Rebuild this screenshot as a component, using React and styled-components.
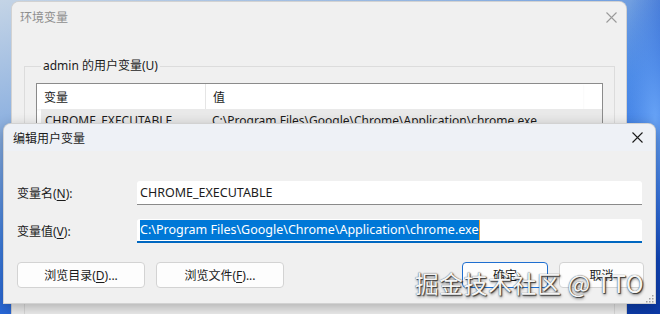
import styled, { createGlobalStyle } from 'styled-components';

const Global = createGlobalStyle`
  html, body {
    margin: 0;
    padding: 0;
    overflow: hidden;
  }
  body {
    font-family: 'Noto Sans', 'Noto Sans CJK SC', sans-serif;
    font-size: 12px;
    color: #1b1b1b;
  }
`

const Desktop = styled.div`
  position: relative;
  width: 660px;
  height: 314px;
  overflow: hidden;
  background:
    radial-gradient(ellipse 60px 200px at 655px 120px, rgba(120, 180, 255, 0.8), transparent 70%),
    radial-gradient(ellipse 90px 260px at 700px 60px, #0a3fc0, transparent 80%),
    linear-gradient(165deg, #c4d4e6 0%, #8fb2e0 25%, #3f7fe0 50%, #1656d4 75%, #0c3aa8 100%);
`

const Window = styled.div`
  position: absolute;
  left: ${p => p.$left}px;
  top: ${p => p.$top}px;
  width: ${p => p.$width}px;
  height: ${p => p.$height}px;
  display: flex;
  flex-direction: column;
  border-radius: 8px 8px 0 0;
  border: 1px solid rgba(0, 0, 0, 0.12);
  box-sizing: border-box;
  overflow: hidden;
  background: ${p => p.$bg};
  box-shadow: ${p => p.$shadow ? '0 4px 14px rgba(0, 0, 0, 0.28)' : 'none'};
`

const TitleBar = styled.div`
  display: flex;
  align-items: center;
  justify-content: space-between;
  height: ${p => p.$height}px;
  padding: 0 ${p => p.$padRight}px 0 ${p => p.$padLeft}px;
  background: ${p => p.$bg};
  color: ${p => p.$color};
  flex-shrink: 0;
`

const TitleText = styled.span`
  font-size: 12px;
`

const BackContent = styled.div`
  padding: 26px 11px 0 12px;
  flex: 1;
`

const GroupBox = styled.fieldset`
  margin: 0;
  height: 300px;
  border: 1px solid #dcdcdc;
  border-bottom: none;
  padding: 9px 11px 0 11px;
`

const Legend = styled.legend`
  padding: 0 2px;
  margin-left: 5px;
  font-size: 12px;
  line-height: 16px;
  color: #1b1b1b;
`

const ListView = styled.div`
  border: 1px solid #8c8c8c;
  background: #ffffff;
  height: 160px;
  display: flex;
  flex-direction: column;
`

const ListHeader = styled.div`
  display: grid;
  grid-template-columns: 169px 1fr;
  height: 25px;
  margin-right: 19px;
  box-shadow: 0 1px 2px rgba(0, 0, 0, 0.06);
`

const HeaderCell = styled.div`
  display: flex;
  align-items: center;
  padding-left: 7px;
  border-right: ${p => p.$sep ? '1px solid #e5e5e5' : 'none'};
`

const ListRow = styled.div`
  display: grid;
  grid-template-columns: 169px 1fr;
  height: 22px;
  margin-left: 4px;
  background: #e9e9e9;
  align-items: center;
`

const RowCell = styled.div`
  padding-left: ${p => p.$pad}px;
  white-space: nowrap;
  overflow: hidden;
`

const DialogBody = styled.div`
  display: flex;
  flex-direction: column;
  padding: 30px 13px 16px 13px;
  flex: 1;
  position: relative;
`

const FieldRow = styled.div`
  display: flex;
  align-items: center;
  margin-bottom: ${p => p.$gap}px;
`

const Label = styled.label`
  width: 120px;
  font-size: 12px;
`

const Key = styled.u`
  text-underline-offset: 2px;
`

const Field = styled.div`
  flex: 1;
  height: 24px;
  box-sizing: border-box;
  background: #ffffff;
  border-radius: 3px 3px 0 0;
  border-bottom: ${p => p.$focused ? '2px solid #0067c0' : '1px solid #8a8a8a'};
  display: flex;
  align-items: center;
  padding-left: 3px;
  font-size: 12.5px;
  white-space: nowrap;
`

const Selected = styled.span`
  background: #0078d7;
  color: #ffffff;
  line-height: 20px;
  padding-right: 1px;
  border-right: 1px solid #f0a030;
`

const ButtonRow = styled.div`
  display: flex;
  align-items: center;
  gap: 11px;
  margin-top: 7px;
`

const Button = styled.button`
  width: ${p => p.$width}px;
  height: 26px;
  margin-left: ${p => p.$push ? 'auto' : '0'};
  background: #fdfdfd;
  border: 1px solid ${p => p.$primary ? '#1f6fd0' : '#d3d3d3'};
  border-radius: 4px;
  font-family: 'Noto Sans', 'Noto Sans CJK SC', sans-serif;
  font-size: 12px;
  color: #1b1b1b;
  padding: 0;
  margin-right: ${p => p.$tight ? '-2px' : '0'};
`

const Grip = styled.svg`
  position: absolute;
  right: 1px;
  bottom: 1px;
`

const Watermark = styled.div`
  position: absolute;
  right: 16px;
  top: 267px;
  font-family: 'Noto Sans CJK SC', sans-serif;
  font-size: 24px;
  line-height: 32px;
  letter-spacing: 0.5px;
  color: #f4f4f4;
  text-shadow: 0 0 1px #3a3a3a, 1px 1px 1px #3a3a3a, 1px 2px 3px rgba(0, 0, 0, 0.45);
  white-space: nowrap;
`

const CloseIcon = ({ color }) => (
  <svg width="11" height="11" viewBox="0 0 11 11">
    <path d="M0.5 0.5 L10.5 10.5 M10.5 0.5 L0.5 10.5" stroke={color} strokeWidth="1.1" fill="none" />
  </svg>
)

export default function App() {
  return (
    <Desktop>
      <Global />
      <Window $left={11} $top={1} $width={616} $height={340} $bg="#f0f0f0">
        <TitleBar $height={30} $padLeft={8} $padRight={9} $bg="#f0f0f0" $color="#8e8e8e">
          <TitleText>环境变量</TitleText>
          <CloseIcon color="#9a9a9a" />
        </TitleBar>
        <BackContent>
          <GroupBox>
            <Legend>admin 的用户变量(U)</Legend>
            <ListView>
              <ListHeader>
                <HeaderCell $sep>变量</HeaderCell>
                <HeaderCell>值</HeaderCell>
              </ListHeader>
              <ListRow>
                <RowCell $pad={4}>CHROME_EXECUTABLE</RowCell>
                <RowCell $pad={2}>C:\Program Files\Google\Chrome\Application\chrome.exe</RowCell>
              </ListRow>
            </ListView>
          </GroupBox>
        </BackContent>
      </Window>

      <Window $left={3} $top={123} $width={653} $height={181} $bg="#f0f0f0" $shadow>
        <TitleBar $height={27} $padLeft={9} $padRight={12} $bg="#eef1f6" $color="#1b1b1b">
          <TitleText>编辑用户变量</TitleText>
          <CloseIcon color="#1b1b1b" />
        </TitleBar>
        <DialogBody>
          <FieldRow $gap={14}>
            <Label>变量名(<Key>N</Key>):</Label>
            <Field>CHROME_EXECUTABLE</Field>
          </FieldRow>
          <FieldRow $gap={12}>
            <Label>变量值(<Key>V</Key>):</Label>
            <Field $focused>
              <Selected>C:\Program Files\Google\Chrome\Application\chrome.exe</Selected>
            </Field>
          </FieldRow>
          <ButtonRow>
            <Button $width={128}>浏览目录(<Key>D</Key>)...</Button>
            <Button $width={128}>浏览文件(<Key>F</Key>)...</Button>
            <Button $width={86} $push $primary>确定</Button>
            <Button $width={85} $tight>取消</Button>
          </ButtonRow>
          <Grip width="8" height="8" viewBox="0 0 8 8">
            <g fill="#a0a0a0">
              <rect x="6" y="0" width="1.5" height="1.5" />
              <rect x="3" y="3" width="1.5" height="1.5" />
              <rect x="6" y="3" width="1.5" height="1.5" />
              <rect x="0" y="6" width="1.5" height="1.5" />
              <rect x="3" y="6" width="1.5" height="1.5" />
              <rect x="6" y="6" width="1.5" height="1.5" />
            </g>
          </Grip>
        </DialogBody>
      </Window>

      <Watermark>掘金技术社区 @ TTO</Watermark>
    </Desktop>
  )
}
